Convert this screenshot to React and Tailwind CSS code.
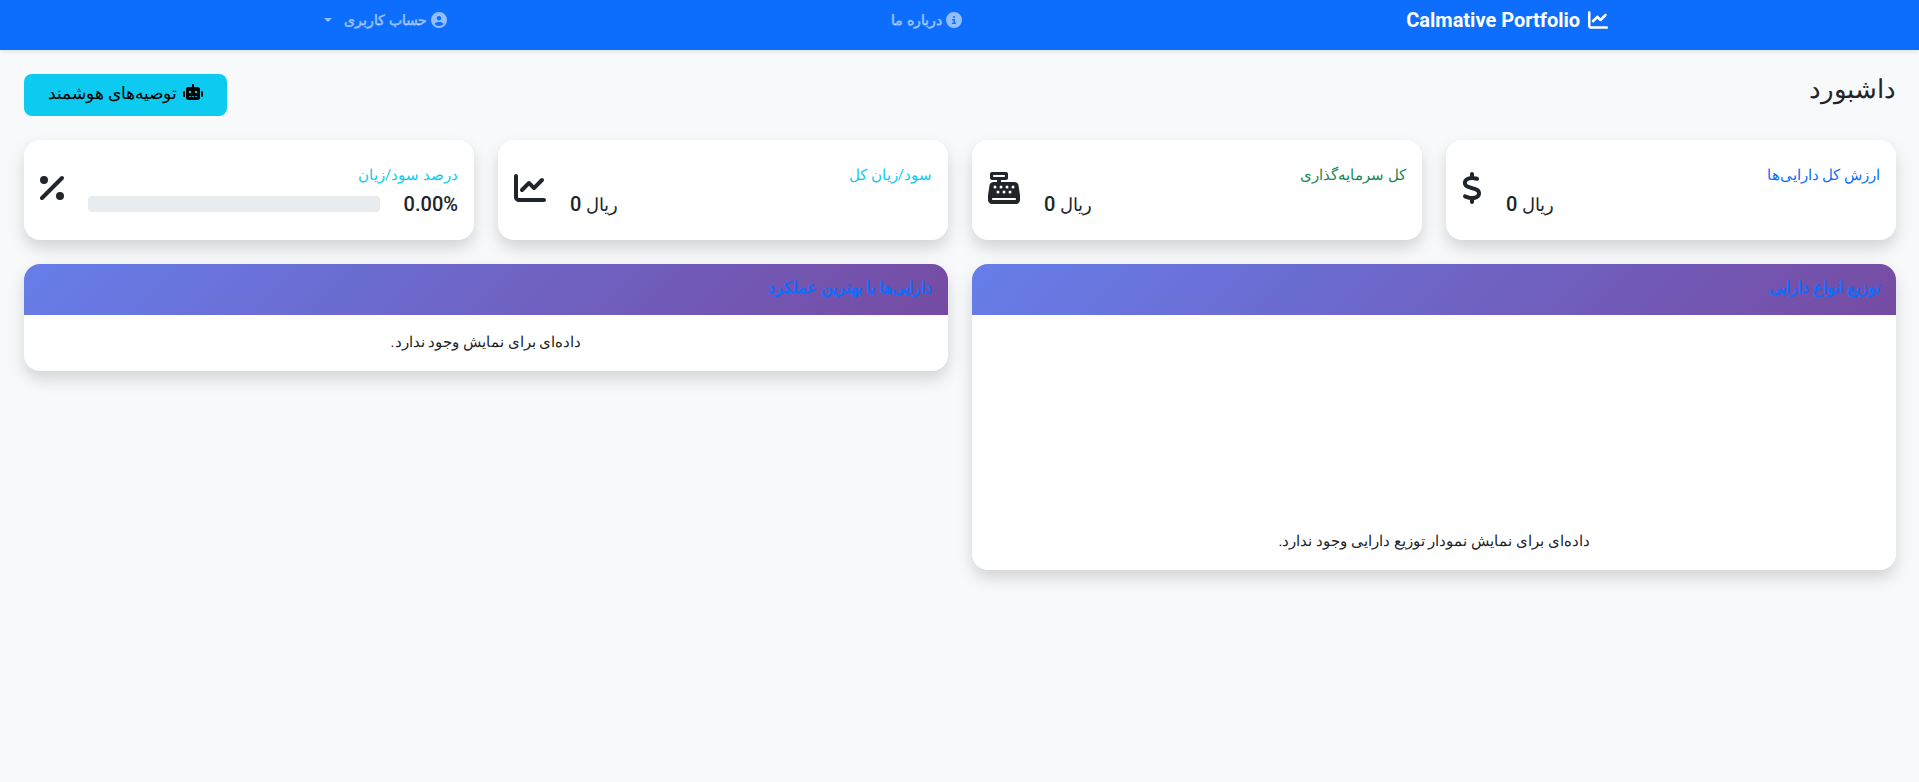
import React from "react";
import {
  FaCashRegister,
  FaChartLine,
  FaCircleInfo,
  FaCircleUser,
  FaDollarSign,
  FaPercent,
  FaRobot,
} from "react-icons/fa6";

function NavBar() {
  return (
    <nav className="flex h-[50px] items-start justify-between bg-[#0d6efd] pt-2 pr-[16.2%] pl-[16.9%] shadow-[0_2px_4px_rgba(0,0,0,0.075)]">
      <a href="#home" className="flex items-center gap-2 text-xl leading-6 font-bold text-white">
        <FaChartLine className="size-5" />
        <span>Calmative Portfolio</span>
      </a>
      <a href="#about" className="flex items-center gap-1 text-sm leading-6 font-bold text-white/55">
        <FaCircleInfo className="size-4" />
        <span>درباره ما</span>
      </a>
      <button type="button" className="flex items-center gap-1 text-sm leading-6 font-bold text-white/55">
        <FaCircleUser className="size-4" />
        <span>حساب کاربری</span>
        <span className="ms-2 border-x-4 border-t-4 border-x-transparent border-t-current" />
      </button>
    </nav>
  );
}

function StatCard({ label, color, icon: Icon, iconWidth, children }) {
  return (
    <section className="flex h-[100px] items-start gap-6 rounded-2xl bg-white px-4 pt-6 shadow-[0_8px_16px_rgba(0,0,0,0.15)]">
      <div className="flex-1">
        <h2 className={`text-[15px] leading-[22px] ${color}`}>{label}</h2>
        <div className="mt-1.5 flex h-6 items-center text-xl leading-6 font-medium">{children}</div>
      </div>
      <Icon className={`mt-2 h-8 shrink-0 ${iconWidth}`} />
    </section>
  );
}

function Amount({ value }) {
  return (
    <span className="ms-auto">
      <span className="text-lg leading-6">ریال</span> {value}
    </span>
  );
}

function Panel({ title, children }) {
  return (
    <section className="overflow-hidden rounded-2xl bg-white shadow-[0_8px_16px_rgba(0,0,0,0.15)]">
      <h2 className="h-[51px] bg-[linear-gradient(135deg,#667eea_0%,#764ba2_100%)] px-4 pt-3 text-base leading-6 font-bold text-[#0d6efd]">
        {title}
      </h2>
      <div className="p-4">{children}</div>
    </section>
  );
}

export default function App() {
  return (
    <div
      dir="rtl"
      lang="fa"
      className="min-h-screen bg-[#f8f9fa] font-[Roboto,'Noto_Sans',sans-serif] text-[#212529]"
    >
      <NavBar />
      <main className="flex flex-col gap-6 py-6 pr-[23px] pl-6">
        <header className="flex items-start justify-between">
          <h1 className="text-[26px] leading-[30px] font-medium">داشبورد</h1>
          <button
            type="button"
            className="flex h-[42px] items-start gap-1.5 rounded-lg bg-[#0dcaf0] px-6 pt-2 text-[17px] leading-[22px] font-medium text-black"
          >
            <FaRobot className="h-5 w-5" />
            <span>توصیه‌های هوشمند</span>
          </button>
        </header>

        <div className="grid grid-cols-4 gap-6">
          <StatCard label="ارزش کل دارایی‌ها" color="text-[#0d6efd]" icon={FaDollarSign} iconWidth="w-5">
            <Amount value="0" />
          </StatCard>
          <StatCard label="کل سرمایه‌گذاری" color="text-[#198754]" icon={FaCashRegister} iconWidth="w-8">
            <Amount value="0" />
          </StatCard>
          <StatCard label="سود/زیان کل" color="text-[#0dcaf0]" icon={FaChartLine} iconWidth="w-8">
            <Amount value="0" />
          </StatCard>
          <StatCard label="درصد سود/زیان" color="text-[#0dcaf0]" icon={FaPercent} iconWidth="w-6">
            <span dir="ltr">0.00%</span>
            <div
              role="progressbar"
              aria-label="درصد سود/زیان"
              aria-valuenow={0}
              aria-valuemin={0}
              aria-valuemax={100}
              className="ms-6 h-4 flex-1 rounded bg-[#e9ecef]"
            />
          </StatCard>
        </div>

        <div className="grid grid-cols-2 items-start gap-6">
          <Panel title="توزیع انواع دارایی">
            <div className="flex h-[223px] items-end justify-center">
              <p className="pb-0.5 text-[15px] leading-[22px]">داده‌ای برای نمایش نمودار توزیع دارایی وجود ندارد.</p>
            </div>
          </Panel>
          <Panel title="دارایی‌ها با بهترین عملکرد">
            <p className="pb-0.5 text-center text-[15px] leading-[22px]">داده‌ای برای نمایش وجود ندارد.</p>
          </Panel>
        </div>
      </main>
    </div>
  );
}
